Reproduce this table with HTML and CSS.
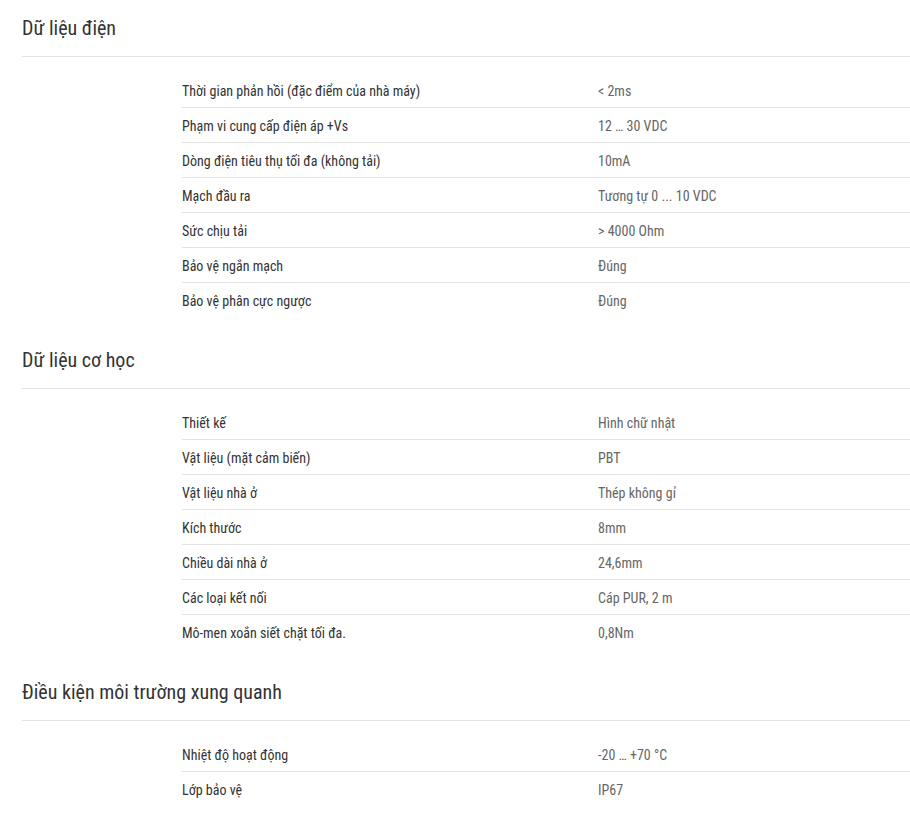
FILE: index.html
```html
<!DOCTYPE html>
<html lang="vi">
<head>
<meta charset="utf-8">
<title>Dữ liệu kỹ thuật</title>
<link rel="stylesheet" href="styles.css">
</head>
<body>
<div class="page">
  <section class="group">
    <h2 class="group-title">Dữ liệu điện</h2>
    <div class="table">
      <div class="row"><span class="label">Thời gian phản hồi (đặc điểm của nhà máy)</span><span class="value">&lt; 2ms</span></div>
      <div class="row"><span class="label">Phạm vi cung cấp điện áp +Vs</span><span class="value">12 … 30 VDC</span></div>
      <div class="row"><span class="label">Dòng điện tiêu thụ tối đa (không tải)</span><span class="value">10mA</span></div>
      <div class="row"><span class="label">Mạch đầu ra</span><span class="value">Tương tự 0 ... 10 VDC</span></div>
      <div class="row"><span class="label">Sức chịu tải</span><span class="value">&gt; 4000 Ohm</span></div>
      <div class="row"><span class="label">Bảo vệ ngắn mạch</span><span class="value">Đúng</span></div>
      <div class="row"><span class="label">Bảo vệ phân cực ngược</span><span class="value">Đúng</span></div>
    </div>
  </section>
  <section class="group">
    <h2 class="group-title">Dữ liệu cơ học</h2>
    <div class="table">
      <div class="row"><span class="label">Thiết kế</span><span class="value">Hình chữ nhật</span></div>
      <div class="row"><span class="label">Vật liệu (mặt cảm biến)</span><span class="value">PBT</span></div>
      <div class="row"><span class="label">Vật liệu nhà ở</span><span class="value">Thép không gỉ</span></div>
      <div class="row"><span class="label">Kích thước</span><span class="value">8mm</span></div>
      <div class="row"><span class="label">Chiều dài nhà ở</span><span class="value">24,6mm</span></div>
      <div class="row"><span class="label">Các loại kết nối</span><span class="value">Cáp PUR, 2 m</span></div>
      <div class="row"><span class="label">Mô-men xoắn siết chặt tối đa.</span><span class="value">0,8Nm</span></div>
    </div>
  </section>
  <section class="group">
    <h2 class="group-title">Điều kiện môi trường xung quanh</h2>
    <div class="table">
      <div class="row"><span class="label">Nhiệt độ hoạt động</span><span class="value">-20 … +70 °C</span></div>
      <div class="row"><span class="label">Lớp bảo vệ</span><span class="value">IP67</span></div>
    </div>
  </section>
</div>
</body>
</html>
```
FILE: styles.css
```css
html, body {
  margin: 0;
  padding: 0;
  background: #ffffff;
}
body {
  font-family: Roboto, "Liberation Sans", sans-serif;
  font-stretch: condensed;
  color: #333333;
}
.page {
  margin-left: 22px;
  width: 888px;
}
.group {
  margin-bottom: 15px;
}
.group-title {
  margin: 0;
  padding: 14px 0 14px;
  font-size: 20px;
  line-height: 28px;
  font-weight: 400;
  color: #333333;
  border-bottom: 1px solid #e3e3e3;
}
.table {
  margin: 16px 0 0 160px;
}
.row {
  display: grid;
  grid-template-columns: 416px 1fr;
  box-sizing: content-box;
  height: 32px;
  padding-top: 2px;
  align-items: center;
  font-size: 14px;
}
.row + .row {
  border-top: 1px solid #e3e3e3;
}
.label {
  color: #333333;
}
.value {
  color: #666666;
}
```
